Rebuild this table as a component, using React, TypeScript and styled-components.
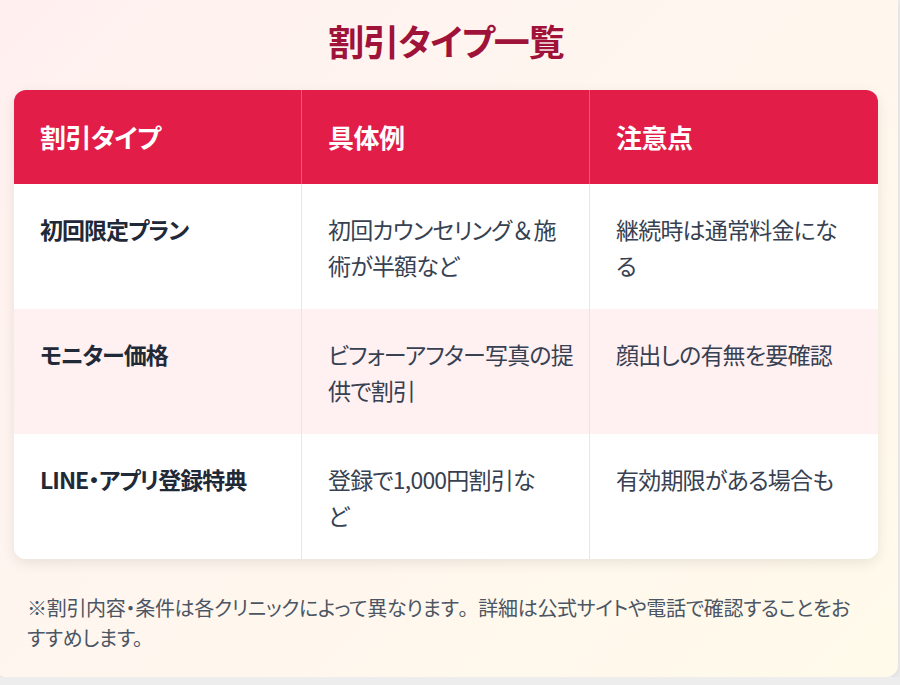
import React from "react";
import styled, { createGlobalStyle } from "styled-components";

const Global = createGlobalStyle`
  html, body { margin: 0; padding: 0; }
  body {
    background: #ededed;
    font-family: "Noto Sans CJK JP", "Noto Sans", sans-serif;
    font-feature-settings: "palt";
    overflow: hidden;
  }
`;

const Card = styled.section`
  width: 904px;
  box-sizing: border-box;
  margin-left: -6px;
  height: 677px;
  padding: 14px 20px 0 20px;
  border-radius: 0 0 12px 12px;
  background: linear-gradient(135deg, #fff0ef 0%, #fff6ef 45%, #fffaea 100%);
  box-shadow: 0 3px 8px rgba(0, 0, 0, 0.08);
`;

const Title = styled.h2`
  margin: 0 0 24px;
  text-align: center;
  font-size: 36px;
  line-height: 52px;
  font-weight: 700;
  letter-spacing: -1px;
  color: #9f1239;
`;

const Table = styled.table`
  width: 864px;
  border-collapse: separate;
  border-spacing: 0;
  table-layout: fixed;
  border-radius: 12px;
  overflow: hidden;
  background: #ffffff;
  box-shadow: 0 4px 14px rgba(0, 0, 0, 0.09);
`;

const Th = styled.th<{ $last?: boolean }>`
  background: #e11d48;
  color: #ffffff;
  text-align: left;
  font-size: 26px;
  font-weight: 700;
  letter-spacing: -0.5px;
  line-height: 34px;
  padding: 30px 26px;
  border-right: ${(p) => (p.$last ? "none" : "1px solid rgba(255,255,255,0.28)")};
`;

const Row = styled.tr<{ $tint?: boolean }>`
  background: ${(p) => (p.$tint ? "#fff0f1" : "#ffffff")};
`;

const Td = styled.td<{ $strong?: boolean; $last?: boolean }>`
  vertical-align: top;
  font-size: 23px;
  letter-spacing: ${(p) => (p.$strong ? "-1px" : "-0.8px")};
  line-height: 36px;
  white-space: nowrap;
  padding: 27px 10px 26px 26px;
  height: 72px;
  color: ${(p) => (p.$strong ? "#1f2937" : "#374151")};
  font-weight: ${(p) => (p.$strong ? 700 : 400)};
  border-right: ${(p) => (p.$last ? "none" : "1px solid #e7e7ea")};
`;

const Wide = styled.span`
  font-feature-settings: normal;
`;

const Note = styled.p`
  margin: 34px 0 0 13px;
  font-size: 20px;
  letter-spacing: -0.3px;
  line-height: 30px;
  color: #4b5563;
`;

type Cell = React.ReactNode[];

const rows: Cell[][] = [
  [
    ["初回限定プラン"],
    [<>初回カウンセリング<Wide>＆</Wide>施</>, "術が半額など"],
    ["継続時は通常料金にな", "る"],
  ],
  [["モニター価格"], ["ビフォーアフター写真の提", "供で割引"], ["顔出しの有無を要確認"]],
  [["LINE・アプリ登録特典"], ["登録で1,000円割引な", "ど"], ["有効期限がある場合も"]],
];

const Lines = ({ lines }: { lines: Cell }) => (
  <>
    {lines.map((l, i) => (
      <React.Fragment key={i}>
        {i > 0 && <br />}
        {l}
      </React.Fragment>
    ))}
  </>
);

export default function App() {
  return (
    <>
      <Global />
      <Card>
        <Title>割引タイプ一覧</Title>
        <Table>
          <thead>
            <tr>
              <Th>割引タイプ</Th>
              <Th>具体例</Th>
              <Th $last>注意点</Th>
            </tr>
          </thead>
          <tbody>
            {rows.map((r, i) => (
              <Row key={i} $tint={i === 1}>
                <Td $strong><Lines lines={r[0]} /></Td>
                <Td><Lines lines={r[1]} /></Td>
                <Td $last><Lines lines={r[2]} /></Td>
              </Row>
            ))}
          </tbody>
        </Table>
        <Note>
          ※割引内容・条件は各クリニックによって異なります<Wide>。</Wide>詳細は公式サイトや電話で確認することをお
          <br />
          すすめします。
        </Note>
      </Card>
    </>
  );
}
